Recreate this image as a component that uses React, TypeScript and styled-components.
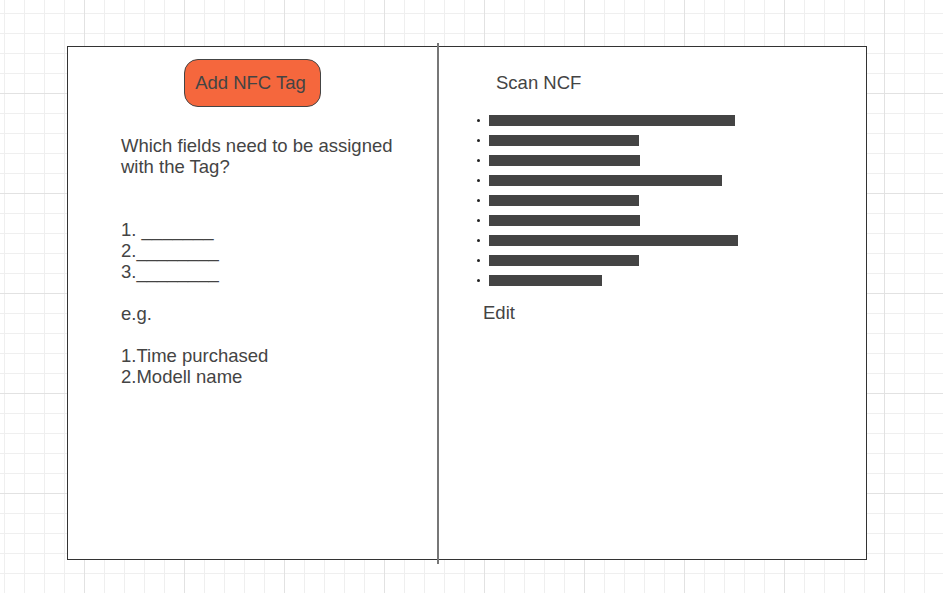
import React from "react";
import styled, { createGlobalStyle } from "styled-components";

const GlobalStyle = createGlobalStyle`
  html, body {
    margin: 0;
    padding: 0;
  }
  body {
    width: 943px;
    height: 593px;
    overflow: hidden;
    font-family: "Liberation Sans", Arial, sans-serif;
    color: #444444;
    background-color: #ffffff;
    background-image:
      linear-gradient(to right, #e2e2e2 1px, transparent 1px),
      linear-gradient(to bottom, #e2e2e2 1px, transparent 1px),
      linear-gradient(to right, #efefef 1px, transparent 1px),
      linear-gradient(to bottom, #efefef 1px, transparent 1px);
    background-size: 100px 100px, 100px 100px, 20px 20px, 20px 20px;
    background-position: 84px 93px, 84px 93px, 4px 13px, 4px 13px;
  }
`;

const bars = [246, 150, 151, 233, 150, 151, 249, 150, 113];

const Frame = styled.div`
  position: relative;
  box-sizing: border-box;
  margin: 46px 0 0 67px;
  width: 800px;
  height: 514px;
  border: 1px solid #333333;
  background: #ffffff;
  display: grid;
  grid-template-columns: 370px 1fr;
`;

const Divider = styled.div`
  position: absolute;
  left: 369px;
  top: -4px;
  width: 2px;
  height: 521px;
  background: #777777;
`;

const Column = styled.div`
  display: flex;
  flex-direction: column;
`;

const CenterRow = styled.div`
  display: flex;
  justify-content: center;
  padding: 12px 2px 0 0;
`;

const TagButton = styled.div`
  box-sizing: border-box;
  width: 137px;
  height: 48px;
  padding-right: 3px;
  border: 1px solid #444444;
  border-radius: 14px;
  background: #f5673d;
  display: flex;
  align-items: center;
  justify-content: center;
  font-size: 18.5px;
  color: #444444;
`;

const TextBlock = styled.div`
  margin-top: 28px;
  padding-left: 53px;
  font-size: 18.5px;
  line-height: 21px;
  white-space: pre;
`;

const Title = styled.div`
  margin-top: 25px;
  padding-left: 58px;
  font-size: 18.5px;
  line-height: 21px;
`;

const BarList = styled.ul`
  list-style: none;
  margin: 17px 0 0;
  padding: 0 0 0 52px;
  display: flex;
  flex-direction: column;
`;

const BarItem = styled.li`
  height: 20px;
  display: flex;
  align-items: center;
  &::before {
    content: "";
    width: 3px;
    height: 3px;
    border-radius: 50%;
    background: #222222;
    margin: 0 9px 0 -13px;
    flex: none;
  }
`;

const Bar = styled.span`
  display: block;
  height: 11px;
  background: #444444;
`;

const EditLabel = styled.div`
  margin-top: 12px;
  padding-left: 45px;
  font-size: 18.5px;
  line-height: 21px;
`;

const leftText = `Which fields need to be assigned
with the Tag?


1. _______
2.________
3.________

e.g.

1.Time purchased
2.Modell name`;

export default function App() {
  return (
    <>
      <GlobalStyle />
      <Frame>
        <Column>
          <CenterRow>
            <TagButton>Add NFC Tag</TagButton>
          </CenterRow>
          <TextBlock>{leftText}</TextBlock>
        </Column>
        <Column>
          <Title>Scan NCF</Title>
          <BarList>
            {bars.map((w, i) => (
              <BarItem key={i}>
                <Bar style={{ width: w }} />
              </BarItem>
            ))}
          </BarList>
          <EditLabel>Edit</EditLabel>
        </Column>
        <Divider />
      </Frame>
    </>
  );
}
